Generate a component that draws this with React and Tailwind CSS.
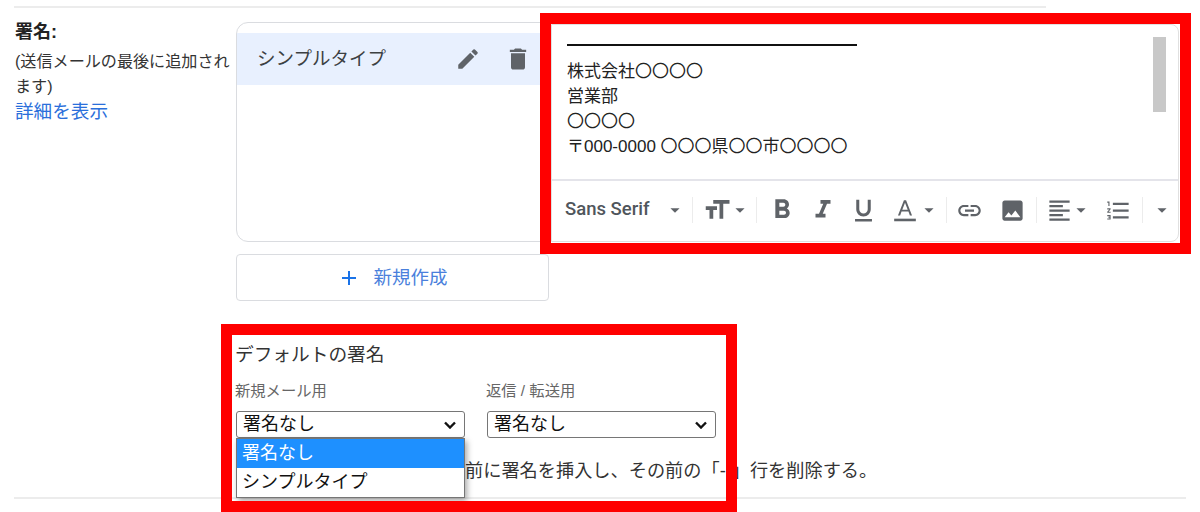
import {
  MdAdd, MdArrowDropDown, MdDelete, MdEdit, MdFormatAlignLeft, MdFormatBold, MdFormatItalic,
  MdFormatListNumbered, MdFormatSize, MdFormatUnderlined, MdInsertLink, MdPhoto,
} from 'react-icons/md'

const jp = 'font-["Liberation_Sans","Noto_Sans_CJK_JP",sans-serif]'

const Divider = () => <div className="w-px h-[26px] bg-[#ececec] shrink-0" />

const Arrow = ({ className }) => <MdArrowDropDown className={`text-[#5f6368] text-[22px] shrink-0 ${className || ''}`} />

const Cell = ({ children, w }) => (
  <div className={`flex items-center justify-center shrink-0 text-[#5f6368] ${w}`}>{children}</div>
)

const Toolbar = () => (
  <div className="h-[62px] border-t-2 border-[#e4e4ea] flex items-center pl-[13px] pb-[2px]">
    <div className="w-[127px] shrink-0 flex items-center">
      <span className='w-[99px] font-["Roboto",sans-serif] font-medium text-[18.5px] text-[#50565c]'>Sans Serif</span>
      <Arrow />
    </div>
    <Divider />
    <div className="w-[63px] shrink-0 flex items-center pl-[9px]">
      <MdFormatSize className="text-[#5f6368] text-[30px] shrink-0" />
      <Arrow className="-ml-[3px]" />
    </div>
    <Divider />
    <div className="flex items-center pl-[4px]">
      <Cell w="w-[41px]"><MdFormatBold className="text-[32px]" /></Cell>
      <Cell w="w-[41px]"><MdFormatItalic className="text-[30px]" /></Cell>
      <Cell w="w-[41px]"><MdFormatUnderlined className="text-[29px]" /></Cell>
      <Cell w="w-[41px]">
        <svg viewBox="0 0 24 24" className="w-[26px] h-[26px]" fill="currentColor">
          <path d="M2 20h20v2.4H2z" />
          <path d="M11 3h2l5.5 14h-2l-1.3-3.6H8.8L7.5 17h-2L11 3zm-1.5 8.7h5L12 5.2 9.5 11.7z" />
        </svg>
      </Cell>
      <Arrow className="-ml-[7px]" />
    </div>
    <div className="w-[6px]" />
    <Divider />
    <div className="flex items-center pl-[2px]">
      <Cell w="w-[41px]"><MdInsertLink className="text-[27px]" /></Cell>
      <Cell w="w-[44px]"><MdPhoto className="text-[27px]" /></Cell>
    </div>
    <div className="w-[2px]" />
    <Divider />
    <div className="flex items-center pl-[9px]">
      <MdFormatAlignLeft className="text-[#5f6368] text-[27px] shrink-0" />
      <Arrow className="-ml-[3px]" />
    </div>
    <Cell w="w-[42px] ml-[5px]"><MdFormatListNumbered className="text-[27px]" /></Cell>
    <div className="w-[3px]" />
    <Divider />
    <Arrow className="ml-[8px]" />
  </div>
)

const Editor = () => (
  <div className="w-[628px] h-[218px] mt-[2px] shrink-0 bg-white border border-[#e0e0e0] rounded-r-lg flex flex-col">
    <div className="flex-1 relative pl-[15px] pt-[8px] text-[#222] text-[17px] leading-[25px]">
      <div className="h-[26px] flex items-center"><div className="w-[290px] h-[2px] bg-[#111] -mt-[2px]" /></div>
      <p>株式会社〇〇〇〇</p>
      <p>営業部</p>
      <p>〇〇〇〇</p>
      <p>〒000-0000 〇〇〇県〇〇市〇〇〇〇</p>
      <div className="absolute left-[601px] top-[12px] w-[13px] h-[75px] bg-[#c8c8c8]" />
    </div>
    <Toolbar />
  </div>
)

const SelectBox = ({ w }) => (
  <div className={`${w} h-[27px] bg-white border border-[#767676] rounded-[3px] flex items-center justify-between pl-[6px] pr-[8px] text-[18px] text-[#111]`}>
    <span>署名なし</span>
    <svg viewBox="0 0 12 8" className="w-[12px] h-[8px]" fill="none" stroke="#111" strokeWidth="2.4"><path d="M1 1.5l5 5 5-5" /></svg>
  </div>
)

export default function App() {
  return (
    <div className={`${jp} relative w-[1200px] h-[512px] overflow-hidden bg-white pt-[6px]`}>
      <div className="ml-[14px] w-[1032px] h-[2px] bg-[#ececec]" />

      <div className="flex pt-[14px] pl-[14px]">
        <div className="w-[222px] shrink-0 pl-[1px] text-[16.1px] leading-[25px] text-[#333]">
          <div className="font-bold text-[18px] text-[#222] -mt-[2px]">署名:</div>
          <div className="w-[218px] mt-[4px]">(送信メールの最後に追加されます)</div>
          <a className="text-[18.6px] leading-[25px] text-[#2a6fdb]">詳細を表示</a>
        </div>

        <div className="w-[313px] shrink-0">
          <div className="h-[220px] border border-[#dadce0] rounded-l-xl pt-[10px]">
            <div className="h-[52px] bg-[#e8f0fe] flex items-center pl-[20px] text-[18.5px] text-[#3c4043]">
              <span className="w-[198px]">シンプルタイプ</span>
              <MdEdit className="text-[#5f6368] text-[26px] shrink-0" />
              <MdDelete className="text-[#5f6368] text-[28px] ml-[23px] shrink-0" />
            </div>
          </div>
          <div className="h-[47px] mt-[12px] border border-[#dadce0] rounded-[4px] flex items-center justify-center gap-[12px] text-[18.5px] text-[#4a7fdc]">
            <MdAdd className="text-[#1a73e8] text-[24px]" />
            <span>新規作成</span>
          </div>
        </div>

        <div className="w-[2px] shrink-0" />
        <Editor />
      </div>

      <div className="ml-[235px] mt-[41px]">
        <div className="text-[18.7px] leading-[26px] text-[#333]">デフォルトの署名</div>
        <div className="flex mt-[13px] text-[15.3px] leading-[20px] text-[#666]">
          <span className="w-[251px]">新規メール用</span>
          <span>返信 / 転送用</span>
        </div>
        <div className="flex mt-[10px] gap-[22px] pl-[1px]">
          <SelectBox w="w-[229px]" />
          <SelectBox w="w-[229px]" />
        </div>
        <div className="mt-[21px] pl-[230px] h-[24px] whitespace-nowrap text-[18.2px] leading-[24px] text-[#333]">
          前に署名を挿入し、その前の「--」行を削除する。
        </div>
      </div>
      <div className="ml-[14px] mt-[14px] w-[1172px] h-[2px] bg-[#ececec]" />

      {/* dropdown open over the checkbox row */}
      <div className="absolute left-[236px] top-[438px] w-[229px] h-[60px] bg-white border border-[#767676] shadow-[2px_3px_6px_rgba(0,0,0,0.35)] text-[18px] text-[#111]">
        <div className="h-[29px] bg-[#1e90ff] text-white pl-[5px] leading-[29px]">署名なし</div>
        <div className="h-[29px] pl-[5px] leading-[29px]">シンプルタイプ</div>
      </div>

      {/* red marks put on top of the screenshot */}
      <div className="absolute left-[540px] top-[13px] w-[651px] h-[241px] border-[11px] border-[#ff0000]" />
      <div className="absolute left-[221px] top-[324px] w-[516px] h-[188px] border-[11px] border-[#ff0000]" />
    </div>
  )
}
